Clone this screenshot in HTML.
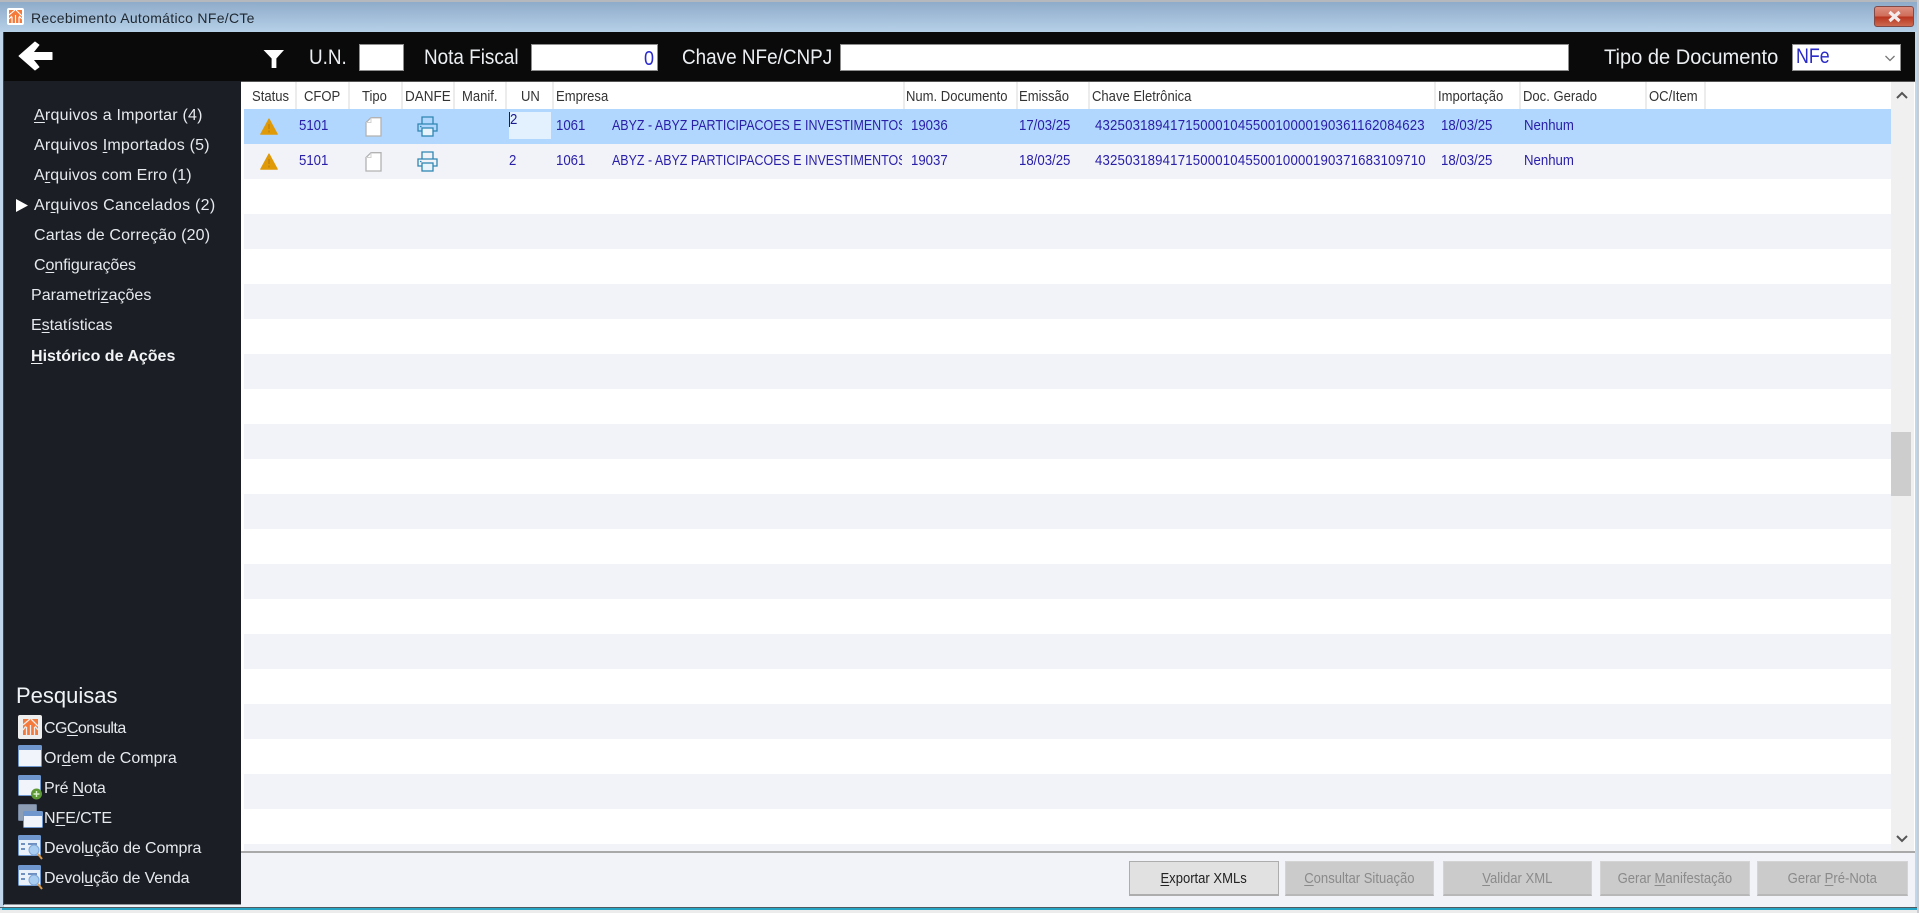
<!DOCTYPE html>
<html lang="pt"><head><meta charset="utf-8"><title>Recebimento Automático NFe/CTe</title>
<style>
html,body{margin:0;padding:0;width:1919px;height:913px;overflow:hidden;background:#f0f0f0}
body{position:relative;font-family:"Liberation Sans",sans-serif}
div,span,svg{position:absolute}
.t{white-space:nowrap;transform-origin:0 50%}
u{position:static;text-underline-offset:2px}
.m{font-size:16px;color:#e6eaee;height:20px;line-height:20px;letter-spacing:.22px;filter:blur(.25px)}
.h{font-size:21px;color:#eceff2;height:26px;line-height:26px;transform:scaleX(.9);top:45px;filter:blur(.25px)}
.g{font-size:15px;color:#333;height:18px;line-height:18px;top:88px;transform:scaleX(.87);filter:blur(.3px)}
.c{font-size:15px;color:#2a20a8;height:18px;line-height:18px;transform:scaleX(.88);filter:blur(.3px)}
.d{position:absolute;top:82px;height:27px;width:2px;background:#ececec}
.s{position:absolute;left:244px;width:1647px;height:35px;background:#f2f3f9}
.i{background:#fff;border:1px solid #8e8e8e;box-sizing:border-box;top:44px;height:27px}
.b{top:861px;height:35px;box-sizing:border-box;background:#cbcbcb;border:1px solid #d4d4d4;border-bottom:2px solid #b8b8b8;color:#8a8a8a;font-size:15px;line-height:33px;text-align:center;white-space:nowrap}
.b span{position:static;display:inline-block;transform:scaleX(.87);filter:blur(.3px)}
</style></head><body>

<!-- window frame -->
<div style="left:0;top:0;width:1919px;height:913px;background:#b9d0e6"></div>
<div style="left:0;top:0;width:1919px;height:2px;background:#b5b8bc"></div>
<div style="left:0;top:2px;width:1919px;height:30px;background:linear-gradient(#8eabc9,#b6d0e8)"></div>
<div style="left:1914px;top:32px;width:5px;height:876px;background:linear-gradient(90deg,#c3d9ec,#bcd2e6)"></div>
<div style="left:0;top:32px;width:3px;height:876px;background:#c0d6ea"></div>

<!-- title -->
<div style="left:7px;top:8px;width:17px;height:17px;background:#fff;border-radius:2px"></div>
<svg style="left:9px;top:10px" width="13" height="13" viewBox="0 0 13 13"><rect width="13" height="13" fill="#f47a3c"/><path d="M0 5L6 0M7 0L13 6M3 13V7M6.5 13V5M10 13V7M0 9L3 6M10 6L13 9" stroke="#fff" stroke-width="1.1" fill="none"/></svg>
<div class="t" style="left:31px;top:9px;height:18px;line-height:18px;font-size:14px;color:#1f2730;letter-spacing:.3px;filter:blur(.25px)">Recebimento Automático NFe/CTe</div>
<div style="left:1874px;top:6px;width:40px;height:21px;box-sizing:border-box;border:1px solid #7f4a48;border-radius:3px;background:linear-gradient(#dd8f80 0,#cf6d5a 48%,#b9341f 52%,#cc6a50 100%)"></div>
<svg style="left:1887px;top:10px" width="15" height="13" viewBox="0 0 15 13"><path d="M2.5 2L12.5 11M12.5 2L2.5 11" stroke="#f4ecec" stroke-width="3.2"/></svg>

<!-- top band -->
<div style="left:4px;top:32px;width:1911px;height:49px;background:#0a0a0a"></div>
<div style="left:3px;top:32px;width:1px;height:873px;background:#3d4247"></div>
<svg style="left:16px;top:41px" width="37" height="30" viewBox="0 0 37 30"><path d="M36 11.5H17L23 4 19 1 3 15 19 29 23 26 17 18.5H36Z" fill="#fff" stroke="#fff" stroke-linejoin="round"/></svg>
<svg style="left:263px;top:49px" width="22" height="20" viewBox="0 0 23 21"><path d="M0.5 1H22L14 10V20H9V10Z" fill="#fff"/></svg>
<div class="t h" style="left:309px">U.N.</div>
<div class="i" style="left:359px;width:45px"></div>
<div class="t h" style="left:424px">Nota Fiscal</div>
<div class="i" style="left:531px;width:127px"></div>
<div class="t" style="left:644px;top:46px;height:26px;line-height:26px;font-size:20px;color:#2a2ad0;transform:scaleX(.9)">0</div>
<div class="t h" style="left:682px">Chave NFe/CNPJ</div>
<div class="i" style="left:840px;width:729px"></div>
<div class="t h" style="left:1604px;transform:scaleX(.955)">Tipo de Documento</div>
<div class="i" style="left:1792px;width:109px"></div>
<div class="t" style="left:1796px;top:44px;height:26px;line-height:26px;font-size:21px;color:#2a2ac8;transform:scaleX(.85)">NFe</div>
<svg style="left:1884px;top:54px" width="12" height="9" viewBox="0 0 12 9"><path d="M1.5 2L6 6.5 10.5 2" stroke="#777" stroke-width="1.3" fill="none"/></svg>

<!-- sidebar -->
<div style="left:4px;top:81px;width:237px;height:823px;background:#1b1e24"></div>
<div style="left:4px;top:904px;width:237px;height:1px;background:#8e9398"></div>
<div class="t m" style="left:34px;top:106px"><u>A</u>rquivos a Importar (4)</div>
<div class="t m" style="left:34px;top:136px">Arquivos <u>I</u>mportados (5)</div>
<div class="t m" style="left:34px;top:166px;letter-spacing:.1px">A<u>r</u>quivos com Erro (1)</div>
<svg style="left:15px;top:198px" width="14" height="15" viewBox="0 0 14 15"><path d="M1 1V14L13 7.5Z" fill="#fff"/></svg>
<div class="t m" style="left:34px;top:196px;letter-spacing:.27px">Ar<u>q</u>uivos Cancelados (2)</div>
<div class="t m" style="left:34px;top:226px;letter-spacing:.16px">Cartas de Correção (20)</div>
<div class="t m" style="left:34px;top:256px;letter-spacing:-.1px">C<u>o</u>nfigurações</div>
<div class="t m" style="left:31px;top:286px;letter-spacing:.02px">Parametri<u>z</u>ações</div>
<div class="t m" style="left:31px;top:316px;letter-spacing:-.03px">E<u>s</u>tatísticas</div>
<div class="t m" style="left:31px;top:347px;font-weight:bold;color:#f2f4f6;letter-spacing:0"><u>H</u>istórico de Ações</div>

<div class="t" style="left:16px;top:682px;height:28px;line-height:28px;font-size:22px;color:#f0f3f6;filter:blur(.25px)">Pesquisas</div>

<div style="left:18px;top:715px;width:24px;height:24px;background:#eee;border-radius:2px"></div>
<svg style="left:23px;top:719px" width="15" height="16" viewBox="0 0 15 16"><rect width="15" height="16" fill="#f47a3c"/><path d="M0 6L7 0M8 0L15 7M3.5 16V8M7.5 16V6M11.5 16V8M0 11L3 7M12 7L15 11" stroke="#eee" stroke-width="1.3" fill="none"/></svg>
<svg style="left:18px;top:745px" width="24" height="22" viewBox="0 0 24 22"><rect x=".5" y=".5" width="23" height="21" rx="1" fill="#f1f4fa" stroke="#6f97cd"/><rect x="1" y="1" width="22" height="4" fill="#6f97cd"/></svg>
<svg style="left:18px;top:775px" width="25" height="26" viewBox="0 0 25 26"><rect x=".5" y=".5" width="22" height="20" rx="1" fill="#f1f4fa" stroke="#6f97cd"/><rect x="1" y="1" width="21" height="4" fill="#6f97cd"/><circle cx="18.5" cy="19" r="5.5" fill="#5d9a36"/><path d="M15.5 19h6M18.5 16v6" stroke="#d8f0c8" stroke-width="1.4"/></svg>
<svg style="left:18px;top:804px" width="25" height="24" viewBox="0 0 25 24"><rect x=".5" y=".5" width="18" height="16" rx="1" fill="#8d9db4" stroke="#73839c"/><rect x="5.5" y="7.5" width="19" height="16" rx="1" fill="#f1f4fa" stroke="#6f97cd"/><rect x="6" y="8" width="18" height="4" fill="#6f97cd"/></svg>
<svg style="left:18px;top:835px" width="25" height="26" viewBox="0 0 25 26"><rect x=".5" y=".5" width="22" height="20" rx="1" fill="#eaf0f9" stroke="#6f97cd"/><rect x="1" y="1" width="21" height="4" fill="#6f97cd"/><path d="M3 9h4M3 14h4M10 9h9" stroke="#6f8fc0" stroke-width="2"/><circle cx="16" cy="15" r="5" fill="#a9cdf0" stroke="#7fa7d8"/><path d="M20 19L24 24" stroke="#d89a50" stroke-width="2"/></svg>
<svg style="left:18px;top:865px" width="25" height="26" viewBox="0 0 25 26"><rect x=".5" y=".5" width="22" height="20" rx="1" fill="#eaf0f9" stroke="#6f97cd"/><rect x="1" y="1" width="21" height="4" fill="#6f97cd"/><path d="M3 9h4M3 14h4M10 9h9" stroke="#6f8fc0" stroke-width="2"/><circle cx="16" cy="15" r="5" fill="#a9cdf0" stroke="#7fa7d8"/><path d="M20 19L24 24" stroke="#d89a50" stroke-width="2"/></svg>

<div class="t m" style="left:44px;top:719px;letter-spacing:-.55px">CG<u>C</u>onsulta</div>
<div class="t m" style="left:44px;top:749px;letter-spacing:.02px">Or<u>d</u>em de Compra</div>
<div class="t m" style="left:44px;top:779px;letter-spacing:-.2px">Pré <u>N</u>ota</div>
<div class="t m" style="left:44px;top:809px;letter-spacing:-.08px">N<u>F</u>E/CTE</div>
<div class="t m" style="left:44px;top:839px;letter-spacing:-.1px">Devol<u>u</u>ção de Compra</div>
<div class="t m" style="left:44px;top:869px;letter-spacing:-.13px">Devol<u>u</u>ção de Venda</div>

<!-- grid -->
<div style="left:241px;top:81px;width:1674px;height:771px;background:#fff"></div>
<div style="left:241px;top:81px;width:1674px;height:1px;background:#555"></div>
<div style="left:241px;top:851px;width:1674px;height:2px;background:#a9a9a9"></div>
<div class="s" style="top:144px"></div>
<div class="s" style="top:214px"></div><div class="s" style="top:284px"></div><div class="s" style="top:354px"></div><div class="s" style="top:424px"></div><div class="s" style="top:494px"></div><div class="s" style="top:564px"></div><div class="s" style="top:634px"></div><div class="s" style="top:704px"></div><div class="s" style="top:774px"></div><div class="s" style="top:844px;height:7px"></div>
<div class="s" style="top:109px;background:#b1d7fe"></div>

<div class="d" style="left:295px"></div><div class="d" style="left:348px"></div><div class="d" style="left:401px"></div><div class="d" style="left:453px"></div><div class="d" style="left:505px"></div><div class="d" style="left:552px"></div><div class="d" style="left:903px"></div><div class="d" style="left:1016px"></div><div class="d" style="left:1088px"></div><div class="d" style="left:1434px"></div><div class="d" style="left:1519px"></div><div class="d" style="left:1645px"></div><div class="d" style="left:1704px"></div>

<div class="t g" style="left:252px">Status</div>
<div class="t g" style="left:304px">CFOP</div>
<div class="t g" style="left:362px">Tipo</div>
<div class="t g" style="left:405px;transform:scaleX(.9)">DANFE</div>
<div class="t g" style="left:462px">Manif.</div>
<div class="t g" style="left:521px">UN</div>
<div class="t g" style="left:556px">Empresa</div>
<div class="t g" style="left:906px">Num. Documento</div>
<div class="t g" style="left:1019px">Emissão</div>
<div class="t g" style="left:1092px">Chave Eletrônica</div>
<div class="t g" style="left:1438px">Importação</div>
<div class="t g" style="left:1523px">Doc. Gerado</div>
<div class="t g" style="left:1649px">OC/Item</div>

<!-- row icons -->
<svg style="left:260px;top:118px" width="18" height="17" viewBox="0 0 18 17"><path d="M9 1L17.2 16.2H.8Z" fill="#e09a08" stroke="#e09a08" stroke-width="1.2" stroke-linejoin="round"/><path d="M9 6v5M9 12.5v2" stroke="#c4850a" stroke-width="1.6"/></svg>
<svg style="left:260px;top:153px" width="18" height="17" viewBox="0 0 18 17"><path d="M9 1L17.2 16.2H.8Z" fill="#e09a08" stroke="#e09a08" stroke-width="1.2" stroke-linejoin="round"/><path d="M9 6v5M9 12.5v2" stroke="#c4850a" stroke-width="1.6"/></svg>
<svg style="left:365px;top:117px" width="17" height="20" viewBox="0 0 17 20"><path d="M6 .7H16V19H1V5.5Z" fill="#fff" stroke="#b2b2b2" stroke-width="1.3"/><path d="M6 .7V5.5H1" fill="none" stroke="#d0d0d0"/></svg>
<svg style="left:365px;top:152px" width="17" height="20" viewBox="0 0 17 20"><path d="M6 .7H16V19H1V5.5Z" fill="#fff" stroke="#b2b2b2" stroke-width="1.3"/><path d="M6 .7V5.5H1" fill="none" stroke="#d0d0d0"/></svg>
<svg style="left:417px;top:116px" width="21" height="21" viewBox="0 0 21 21" fill="none" stroke="#2f86b2" stroke-width="1.3"><path d="M5 8V1H16V8"/><path d="M5 15H1V8H20V15H16"/><rect x="5" y="12" width="11" height="8" fill="#e8f3fb"/><path d="M3 10.5h1.5" /></svg>
<svg style="left:417px;top:151px" width="21" height="21" viewBox="0 0 21 21" fill="none" stroke="#2f86b2" stroke-width="1.3"><path d="M5 8V1H16V8"/><path d="M5 15H1V8H20V15H16"/><rect x="5" y="12" width="11" height="8" fill="#e8f3fb"/><path d="M3 10.5h1.5" /></svg>

<!-- row 1 -->
<div class="t c" style="left:299px;top:117px">5101</div>
<div style="left:509px;top:112px;width:42px;height:27px;background:#e3f0fe"></div>
<div style="left:509px;top:112px;width:1px;height:15px;background:#222"></div>
<div class="t c" style="left:510px;top:111px;color:#1a1a90">2</div>
<div class="t c" style="left:556px;top:117px">1061</div>
<div style="left:612px;top:109px;width:290px;height:35px;overflow:hidden"><div class="t c" style="left:0;top:8px;transform:scaleX(.83)">ABYZ - ABYZ PARTICIPACOES E INVESTIMENTOS</div></div>
<div class="t c" style="left:911px;top:117px">19036</div>
<div class="t c" style="left:1019px;top:117px">17/03/25</div>
<div class="t c" style="left:1095px;top:117px;letter-spacing:.2px">43250318941715000104550010000190361162084623</div>
<div class="t c" style="left:1441px;top:117px">18/03/25</div>
<div class="t c" style="left:1524px;top:117px">Nenhum</div>
<!-- row 2 -->
<div class="t c" style="left:299px;top:152px">5101</div>
<div class="t c" style="left:509px;top:152px">2</div>
<div class="t c" style="left:556px;top:152px">1061</div>
<div style="left:612px;top:144px;width:290px;height:35px;overflow:hidden"><div class="t c" style="left:0;top:8px;transform:scaleX(.83)">ABYZ - ABYZ PARTICIPACOES E INVESTIMENTOS</div></div>
<div class="t c" style="left:911px;top:152px">19037</div>
<div class="t c" style="left:1019px;top:152px">18/03/25</div>
<div class="t c" style="left:1095px;top:152px;letter-spacing:.2px">43250318941715000104550010000190371683109710</div>
<div class="t c" style="left:1441px;top:152px">18/03/25</div>
<div class="t c" style="left:1524px;top:152px">Nenhum</div>

<!-- scrollbar -->
<div style="left:1891px;top:82px;width:23px;height:769px;background:#f0f0f0"></div>
<div style="left:1891px;top:432px;width:20px;height:64px;background:#cdcdcd"></div>
<svg style="left:1895px;top:90px" width="14" height="10" viewBox="0 0 14 10"><path d="M2 8L7 3 12 8" stroke="#555" stroke-width="2" fill="none"/></svg>
<svg style="left:1895px;top:834px" width="14" height="10" viewBox="0 0 14 10"><path d="M2 2L7 7 12 2" stroke="#555" stroke-width="2" fill="none"/></svg>

<!-- bottom panel -->
<div style="left:241px;top:853px;width:1674px;height:54px;background:#f1f3f9"></div>
<div style="left:4px;top:905px;width:237px;height:2px;background:#f1f3f9"></div>
<div style="left:0;top:907px;width:1919px;height:1px;background:#4e5a60"></div>
<div style="left:2px;top:908px;width:1915px;height:2px;background:#27a4c4"></div>
<div style="left:0;top:910px;width:1919px;height:3px;background:#ececec"></div>
<div style="left:1917px;top:0;width:2px;height:913px;background:#c9ccd0"></div>

<div class="b" style="left:1129px;width:150px;background:#e1e1e1;border-color:#adadad;color:#222"><span><u>E</u>xportar XMLs</span></div>
<div class="b" style="left:1285px;width:149px"><span><u>C</u>onsultar Situação</span></div>
<div class="b" style="left:1443px;width:149px"><span><u>V</u>alidar XML</span></div>
<div class="b" style="left:1600px;width:150px"><span>Gerar <u>M</u>anifestação</span></div>
<div class="b" style="left:1757px;width:151px"><span>Gerar <u>P</u>ré-Nota</span></div>
</body></html>
